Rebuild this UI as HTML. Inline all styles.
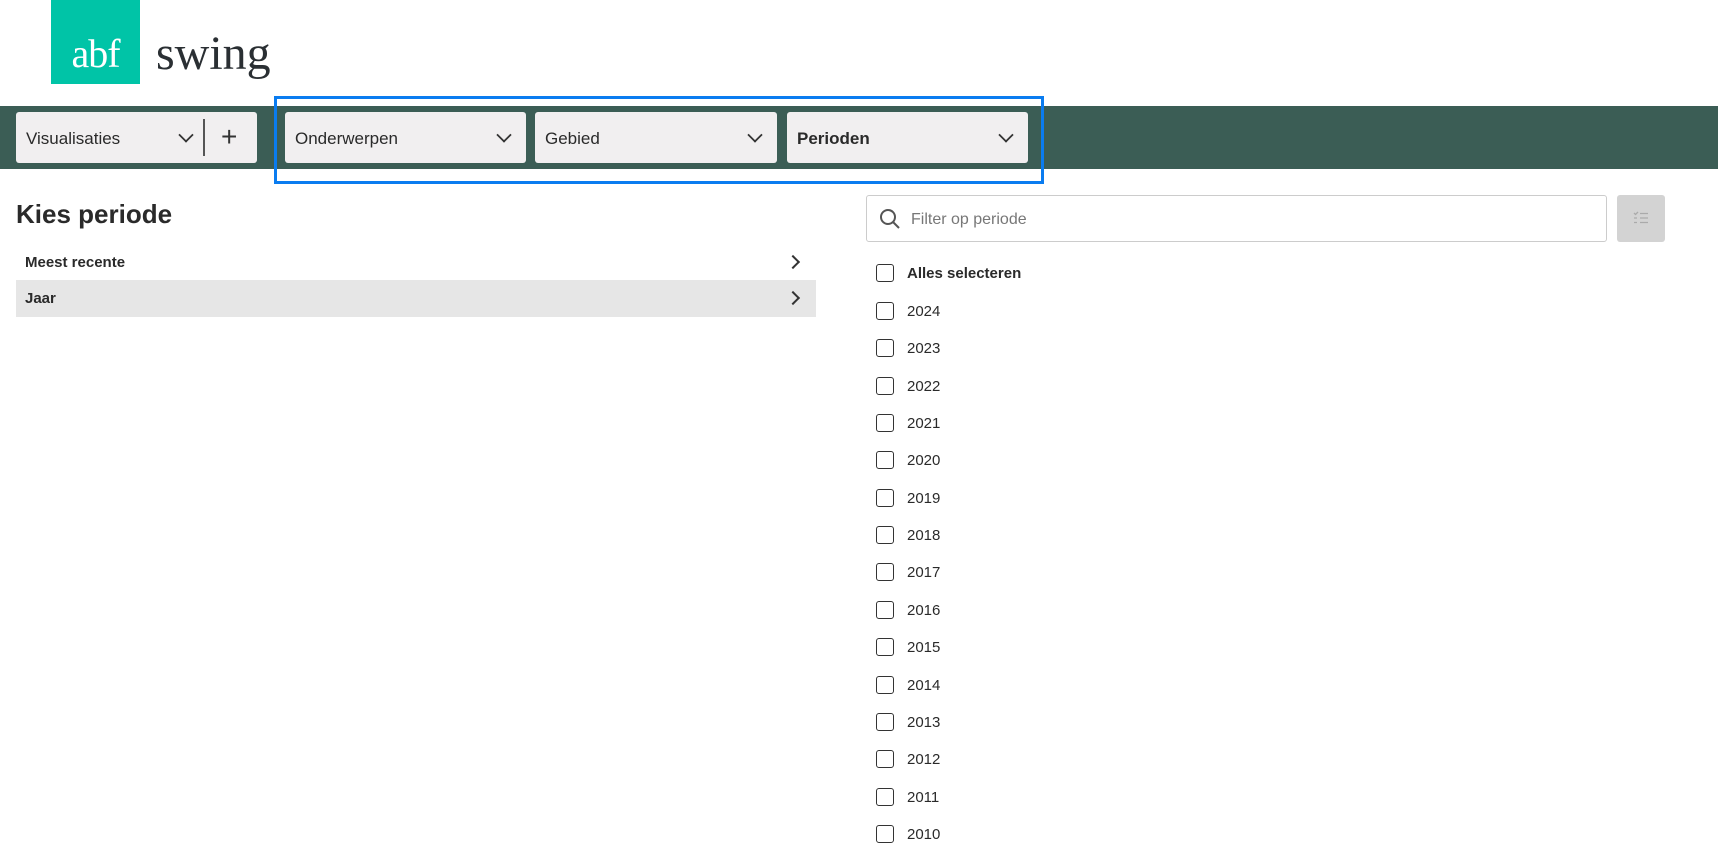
<!DOCTYPE html>
<html><head><meta charset="utf-8"><style>
*{box-sizing:border-box;margin:0;padding:0}
body{width:1718px;height:852px;overflow:hidden;background:#fff;font-family:"Liberation Sans",sans-serif;color:#222;position:relative}
.abs{position:absolute}
.logo{left:51px;top:0;width:89px;height:84px;background:#00c4a7;color:#fff;font-family:"Liberation Serif",serif;font-size:40px;text-align:center;line-height:108px;letter-spacing:-1px}
.swing{left:156px;top:26px;font-family:"Liberation Serif",serif;font-size:48px;color:#2a2f33}
.bar{left:0;top:106px;width:1718px;height:63px;background:#3b5d55}
.sel{top:112px;height:51px;background:#f1eff0;border-radius:3px;font-size:17px;line-height:53px;padding-left:10px;color:#2a2a2a}
.chev{position:absolute;top:19px;width:12px;height:12px;border-right:2px solid #333;border-bottom:2px solid #333;transform:rotate(45deg) scale(.9);transform-origin:center}
.outline{left:274px;top:96px;width:770px;height:88px;border:3px solid #0a7cf0}
h1{position:absolute;left:16px;top:199px;font-size:26px;font-weight:bold;color:#2a2a2a}
.row{left:16px;width:800px;font-size:15px;font-weight:bold;padding-left:9px;color:#2a2a2a}
.rchev{position:absolute;right:18px;width:10px;height:10px;border-right:2px solid #333;border-top:2px solid #333;transform:rotate(45deg)}
.search{left:866px;top:195px;width:741px;height:47px;border:1px solid #ccc;border-radius:3px;font-size:16px;color:#777;line-height:47px;padding-left:44px}
.btn{left:1617px;top:195px;width:48px;height:47px;background:#d3d3d3;border-radius:3px}
.cb{left:876px;width:18px;height:18px;border:1.5px solid #333;border-radius:3px}
.lt{left:907px;font-size:15px;color:#2a2a2a;margin-top:1px}
</style></head><body>
<div class="abs logo">abf</div>
<div class="abs swing">swing</div>
<div class="abs bar"></div>
<div class="abs sel" style="left:16px;width:241px">Visualisaties<span class="chev" style="left:164px;top:17px"></span><span class="abs" style="left:187px;top:7px;width:2px;height:37px;background:#555"></span><span class="abs" style="left:205px;top:0;font-size:28px;line-height:49px;color:#333">+</span></div>
<div class="abs sel" style="left:285px;width:241px">Onderwerpen<span class="chev" style="left:213px;top:17px"></span></div>
<div class="abs sel" style="left:535px;width:242px">Gebied<span class="chev" style="left:214px;top:17px"></span></div>
<div class="abs sel" style="left:787px;width:241px;font-weight:bold">Perioden<span class="chev" style="left:213px;top:17px"></span></div>
<div class="abs outline"></div>
<h1>Kies periode</h1>
<div class="abs row" style="top:245px;height:34px;line-height:36px">Meest recente<span class="rchev" style="top:12px"></span></div>
<div class="abs row" style="top:280px;height:37px;line-height:37px;background:#e6e6e6">Jaar<span class="rchev" style="top:13px"></span></div>
<div class="abs search">Filter op periode
<svg class="abs" style="left:12px;top:12px" width="22" height="22" viewBox="0 0 22 22" fill="none" stroke="#555" stroke-width="2"><circle cx="9" cy="9" r="7"/><path d="M14 14l6 6"/></svg></div>
<div class="abs btn"><svg class="abs" style="left:16px;top:16px" width="16" height="14" viewBox="0 0 16 14" stroke="#aaa" stroke-width="1.3" fill="none"><path d="M1 2l1.5 1.5L5 1M7 2.5h8M1 7h3M7 7h8M1 11.5h3M7 11.5h8"/></svg></div>
<div class="abs cb" style="top:264px"></div><div class="abs lt" style="top:264px;font-weight:bold">Alles selecteren</div>
<div class="abs cb" style="top:302px"></div><div class="abs lt" style="top:302px">2024</div>
<div class="abs cb" style="top:339px"></div><div class="abs lt" style="top:339px">2023</div>
<div class="abs cb" style="top:377px"></div><div class="abs lt" style="top:377px">2022</div>
<div class="abs cb" style="top:414px"></div><div class="abs lt" style="top:414px">2021</div>
<div class="abs cb" style="top:451px"></div><div class="abs lt" style="top:451px">2020</div>
<div class="abs cb" style="top:489px"></div><div class="abs lt" style="top:489px">2019</div>
<div class="abs cb" style="top:526px"></div><div class="abs lt" style="top:526px">2018</div>
<div class="abs cb" style="top:563px"></div><div class="abs lt" style="top:563px">2017</div>
<div class="abs cb" style="top:601px"></div><div class="abs lt" style="top:601px">2016</div>
<div class="abs cb" style="top:638px"></div><div class="abs lt" style="top:638px">2015</div>
<div class="abs cb" style="top:676px"></div><div class="abs lt" style="top:676px">2014</div>
<div class="abs cb" style="top:713px"></div><div class="abs lt" style="top:713px">2013</div>
<div class="abs cb" style="top:750px"></div><div class="abs lt" style="top:750px">2012</div>
<div class="abs cb" style="top:788px"></div><div class="abs lt" style="top:788px">2011</div>
<div class="abs cb" style="top:825px"></div><div class="abs lt" style="top:825px">2010</div>
</body></html>
